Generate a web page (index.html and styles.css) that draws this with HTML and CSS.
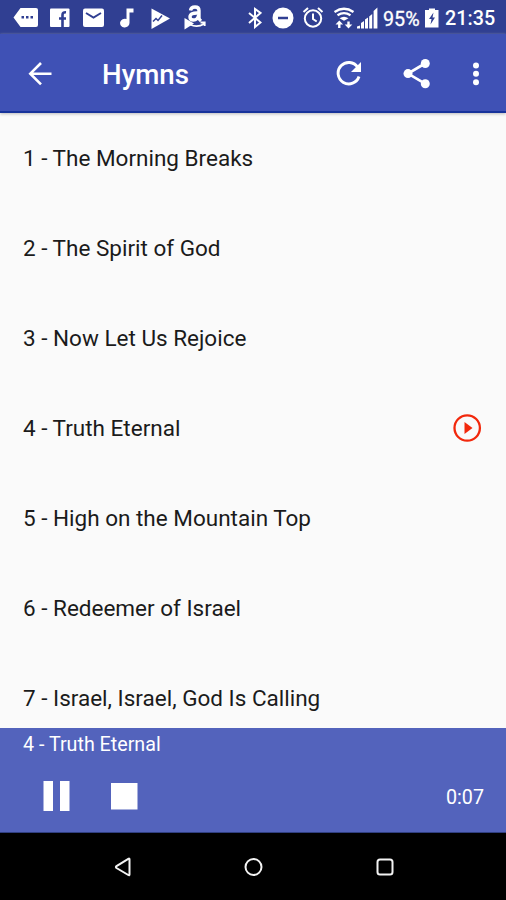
FILE: index.html
```html
<!DOCTYPE html>
<html lang="en">
<head>
<meta charset="utf-8">
<meta name="viewport" content="width=device-width, initial-scale=1">
<title>Hymns</title>
<link rel="stylesheet" href="styles.css">
</head>
<body>
<div class="screen">
  <div class="status">
    <div class="notifications">
      <svg width="25" height="20" viewBox="13 8 25 20" fill="#fff"><path fill-rule="evenodd" d="M20.500 8H36q2 0 2 2V25q0 2-2 2H20.500L13.500 17.500ZM21.500 16v2.500h2.500v-2.500ZM26 16v2.500h2.500v-2.500ZM30.500 16v2.500h2.500v-2.500Z"/></svg>
      <svg class="facebook" width="20" height="20" viewBox="50 8 20 20"><rect x="50" y="8.500" width="19.500" height="18.500" rx="1" fill="#fff"/><path d="M62.500 27.500V15Q62.500 12 66 12.200M59 18.500h7" fill="none" stroke="#303f92" stroke-width="2.600"/></svg>
      <svg class="mail" width="22" height="20" viewBox="83 8 22 20"><rect x="83" y="8.500" width="21" height="18.500" rx="2" fill="#fff"/><path d="M86 13l7.500 4.500L101 13" fill="none" stroke="#303f92" stroke-width="2"/></svg>
      <svg class="note" width="14" height="20" viewBox="120 8 14 20" fill="#fff"><path d="M126.500 8.500h7v4h-4V23a4.700 4.400 0 1 1-3-4Z"/></svg>
      <svg class="play-store" width="20" height="22" viewBox="151 6 20 22"><path d="M151.500 7.500L170 17.500L151.500 28Z" fill="#fff"/><path d="M153 20.500l3-3 2 2 4-5" fill="none" stroke="#303f92" stroke-width="1.500"/></svg>
      <svg class="amazon" width="24" height="26" viewBox="183 5 24 26" fill="none" stroke="#fff"><path d="M190.500 10.500q.5-3.500 4.500-3.500 4 0 4 3.500V18q0 1.500 2 3M198.500 13q-8.500-.5-8.500 4 0 3 3.500 3 4 0 5-4.500" stroke-width="3.400"/><path d="M184.500 18v11.500l9.500-6z" fill="#fff" stroke="none"/><path d="M190 24.500q7 3.500 14-.5M200.500 22.500h4.200v3.500" stroke-width="1.800"/></svg>
    </div>
    <div class="indicators">
      <svg width="14" height="22" viewBox="248 7 14 22"><path d="M249 13L260.500 22.500L255 27V9L260.500 13L249 23" fill="none" stroke="#fff" stroke-width="2"/></svg>
      <svg class="dnd" width="22" height="22" viewBox="272 7 22 22"><circle cx="283" cy="18" r="10.500" fill="#fff"/><path d="M278 18h10" stroke="#303f92" stroke-width="2.500"/></svg>
      <svg class="alarm" width="22" height="22" viewBox="302 7 22 22" fill="none" stroke="#fff"><circle cx="313" cy="18.500" r="8.200" stroke-width="2"/><path d="M303.500 12l4.500-4M322.500 12l-4.500-4M313 13.500v5.500l3.700 2.500" stroke-width="2"/></svg>
      <svg class="wifi" width="22" height="24" viewBox="334 5 22 24" fill="none" stroke="#fff"><path d="M334.500 11q9.500-6.500 19 0M337.500 14.300q6.500-4.300 13 0" stroke-width="2.300"/><path d="M339.500 17.300q4.500-3 9 0l-4.500 2.500z" fill="#fff" stroke="none"/><path d="M339.300 27v-5M348.500 20.500v4" stroke-width="2.400"/><path d="M335.500 23.500l3.800-4 3.800 4zM344.700 23.500l3.800 4 3.800-4z" fill="#fff" stroke="none"/></svg>
      <svg class="signal" width="22" height="22" viewBox="357 6 22 22" fill="#fff"><path d="M357 27.500v-2l3-1v3zM361 27.500v-5.500l3-2v7.500zM365 27.500v-9l3-2v11zM369.200 27.500V15.500l3-2.500v14.500zM373.600 27.500v-17.500l3.800-3.500v21z"/></svg>
      <span class="percent">95%</span>
      <svg class="battery" width="14" height="20" viewBox="425 8 14 20"><path d="M425 10h4V8.500h6V10h3.500v17.500H425Z" fill="#fff"/><path d="M433.500 12.500l-4.500 6.500h2.500l-1 5.500 4.500-7h-2.500z" fill="#303f92"/></svg>
      <span class="clock">21:35</span>
    </div>
  </div>
  <header class="appbar">
    <svg class="back" width="24" height="24" viewBox="28 62 24 24" fill="none" stroke="#fff" stroke-width="2.600"><path d="M51.500 73.700H30.500M41 63L30.300 73.700L41 84.400"/></svg>
    <h1>Hymns</h1>
    <svg class="refresh" width="26" height="26" viewBox="336 61 26 26"><path d="M357.700 67.200A10.700 10.700 0 1 0 359 76.500" fill="none" stroke="#fff" stroke-width="2.900"/><path d="M361 62v10h-10z" fill="#fff"/></svg>
    <svg class="share" width="28" height="30" viewBox="403 59 28 30"><path d="M425 63.500L408 73.600L425 83.700" fill="none" stroke="#fff" stroke-width="2.700"/><g fill="#fff"><circle cx="425.300" cy="63.500" r="4.500"/><circle cx="408" cy="73.600" r="4.500"/><circle cx="425.300" cy="83.700" r="4.500"/></g></svg>
    <svg class="more" width="8" height="26" viewBox="472 61 8 26" fill="#fff"><circle cx="476" cy="65.500" r="3"/><circle cx="476" cy="73.800" r="3"/><circle cx="476" cy="82.200" r="3"/></svg>
  </header>
  <main class="list">
    <div class="row"><span>1 - The Morning Breaks</span></div>
    <div class="row"><span>2 - The Spirit of God</span></div>
    <div class="row"><span>3 - Now Let Us Rejoice</span></div>
    <div class="row"><span>4 - Truth Eternal</span>
      <svg width="30" height="30" viewBox="452 413 30 30"><circle cx="467.200" cy="428" r="12.700" fill="none" stroke="#f2280c" stroke-width="2.300"/><path d="M464.500 422v12l8-6z" fill="#f2280c"/></svg>
    </div>
    <div class="row"><span>5 - High on the Mountain Top</span></div>
    <div class="row"><span>6 - Redeemer of Israel</span></div>
    <div class="row"><span>7 - Israel, Israel, God Is Calling</span></div>
  </main>
  <section class="player">
    <div class="track">4 - Truth Eternal</div>
    <div class="controls">
      <svg width="28" height="30" viewBox="0 0 28 30" fill="#fff"><path d="M.500 0h9.500v30H.500zM17 0h9.500v30H17z"/></svg>
      <svg class="stop" width="27" height="27" viewBox="0 0 27 27" fill="#fff"><path d="M0 0h26.500v26.500H0z"/></svg>
      <span class="time">0:07</span>
    </div>
  </section>
  <nav class="navbar">
    <svg width="18" height="20" viewBox="0 0 18 20"><path d="M15.500 2.300v15.200q0 1.200-1.200.5L2.500 11q-1.200-1 0-1.800L14.300 1.800q1.200-.7 1.200.5z"/></svg>
    <svg class="home" width="20" height="20" viewBox="0 0 20 20"><circle cx="9.500" cy="10" r="8"/></svg>
    <svg class="recent" width="18" height="20" viewBox="0 0 18 20"><rect x="1.500" y="2.500" width="15" height="15" rx="2.500"/></svg>
  </nav>
</div>
</body>
</html>
```
FILE: styles.css
```css
* { box-sizing: border-box; }
body { margin: 0; font-family: Roboto, sans-serif; }
svg { display: block; flex: none; }
.screen { width: 506px; height: 900px; display: flex; flex-direction: column; overflow: hidden; background: #fafafa; }

.status { flex: none; height: 34px; display: flex; justify-content: space-between; align-items: center; padding: 2px 10px 0 13px; background: #303f92; color: #fff; }
.notifications, .indicators { display: flex; align-items: center; }
.facebook { margin-left: 12px; }
.mail { margin-left: 13px; }
.note { margin-left: 15px; }
.play-store { margin-left: 17px; }
.amazon { margin-left: 12px; }
.dnd { margin-left: 10px; }
.alarm { margin-left: 8px; }
.wifi { margin-left: 10px; }
.signal { margin-left: 1px; }
.percent, .clock { line-height: 24px; padding-top: 2px; white-space: nowrap; }
.percent { width: 38px; margin-left: 4px; font-size: 19.7px; -webkit-text-stroke: 0.3px #fff; padding-top: 3px; }
.battery { margin-left: 4px; }
.clock { width: 51px; margin-left: 6px; font-size: 19.8px; font-weight: 500; }

.appbar { flex: none; height: 79px; display: flex; align-items: center; padding: 2px 26px 0 28px; background: #3f51b5; border-bottom: 2px solid #17339b; box-shadow: 0 1px 3px #bbb; position: relative; color: #fff; }
h1 { margin: 0 auto 0 50px; padding-top: 2px; font-size: 27.7px; line-height: 34px; font-weight: 500; }
.share { margin-left: 41px; }
.more { margin-left: 41px; }

.list { flex: 1; min-height: 0; overflow: hidden; }
.row { height: 90px; display: flex; align-items: center; justify-content: space-between; padding: 0 24px 0 23px; font-size: 22.5px; color: #1b1b1b; white-space: nowrap; }

.player { flex: none; height: 105px; padding: 5px 22px 0 23px; background: #5363bc; border-bottom: 1px solid #303f80; color: #fff; }
.track { font-size: 19.7px; line-height: 24px; }
.controls { height: 30px; margin: 24px 0 0 20px; display: flex; align-items: center; }
.stop { margin-left: 40px; }
.time { margin-left: auto; font-size: 19.7px; line-height: 24px; padding-top: 4px; }

.navbar { flex: none; height: 67px; display: flex; align-items: center; padding-left: 114px; background: #000; fill: none; stroke: #f3f3f3; stroke-width: 2; }
.home { margin-left: 112px; }
.recent { margin-left: 112px; }
```
